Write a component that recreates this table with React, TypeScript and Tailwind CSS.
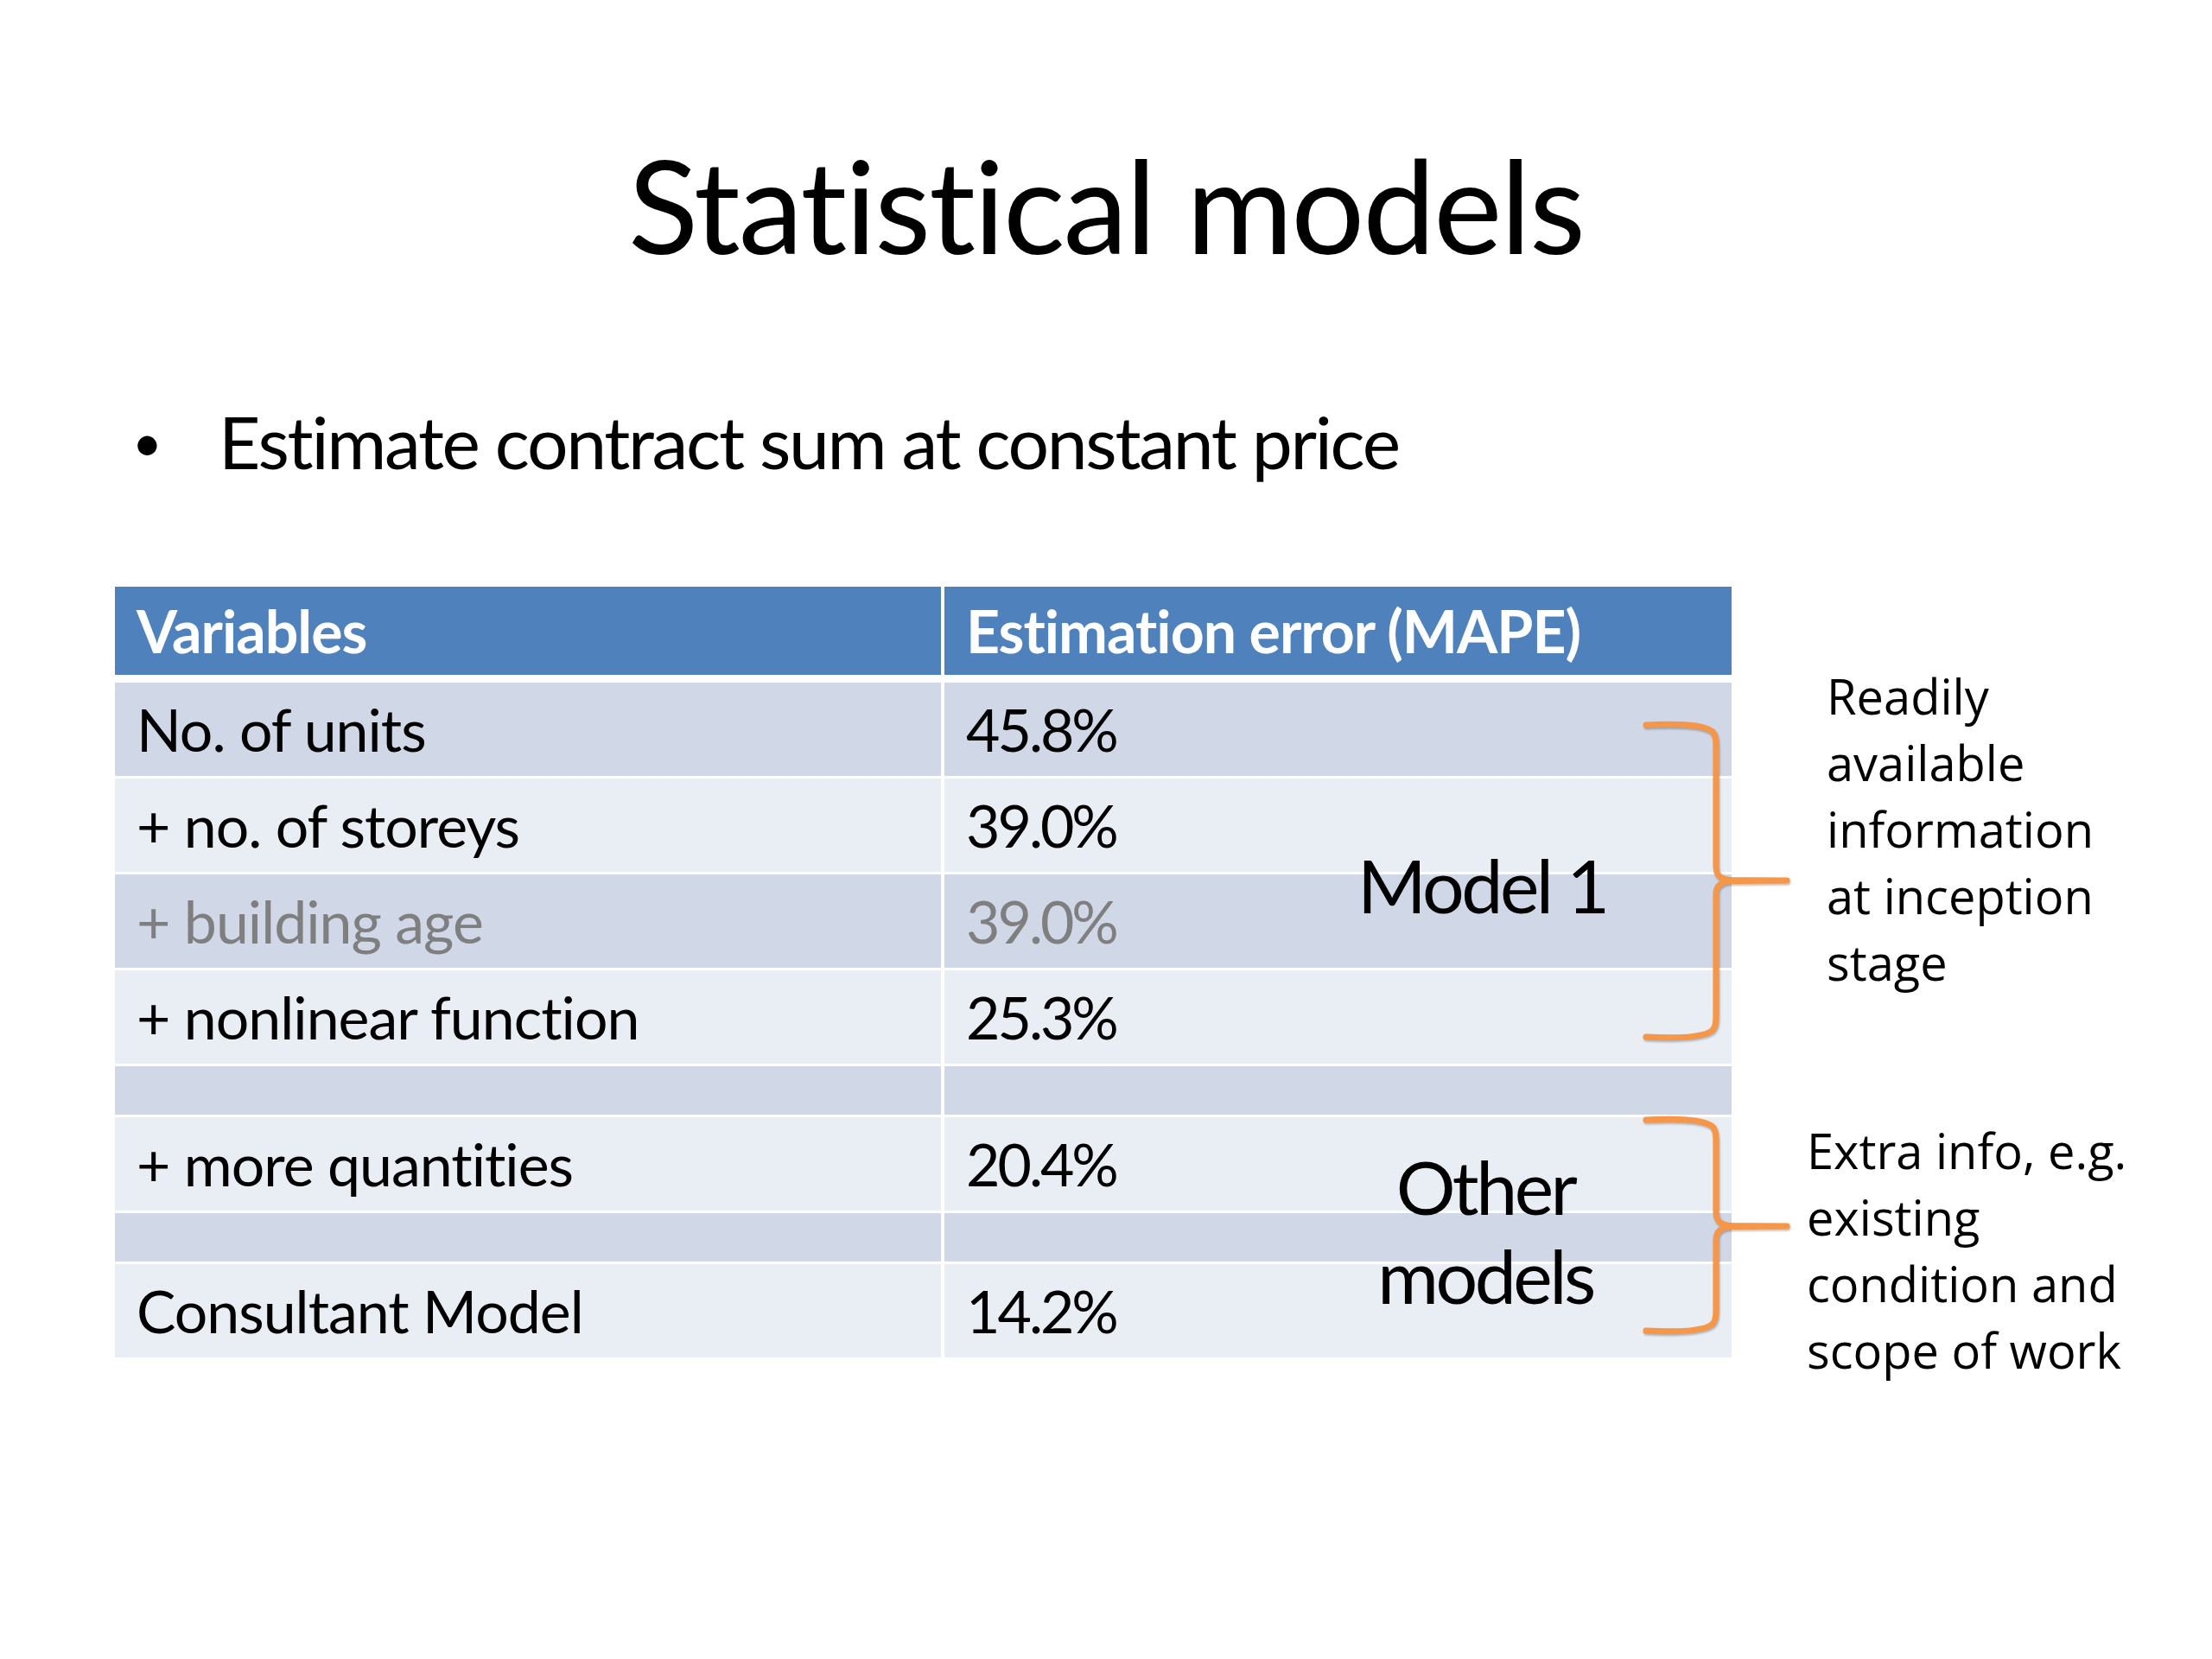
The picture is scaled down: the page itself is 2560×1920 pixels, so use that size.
import React from "react";

const rows = [
  { v: "No. of units", e: "45.8%", band: "dark" },
  { v: "+ no. of storeys", e: "39.0%", band: "light" },
  { v: "+ building age", e: "39.0%", band: "dark", muted: true },
  { v: "+ nonlinear function", e: "25.3%", band: "light" },
  { v: "", e: "", band: "dark", spacer: true },
  { v: "+ more quantities", e: "20.4%", band: "light" },
  { v: "", e: "", band: "dark", spacer: true },
  { v: "Consultant Model", e: "14.2%", band: "light" },
];

// curly brace, tips on the left, beak pointing right
function bracePath(h: number, m: number) {
  return [
    `M0,2 C38,0 66,2 76,9 C81,13 81,20 81,30`,
    `L81,${m - 16} C81,${m - 6} 86,${m - 1} 100,${m - 0.5} L163,${m}`,
    `M163,${m} L100,${m + 0.5} C86,${m + 1} 81,${m + 6} 81,${m + 16}`,
    `L81,${h - 30} C81,${h - 20} 81,${h - 13} 76,${h - 9} C66,${h - 2} 38,${h} 0,${h - 2}`,
  ].join(" ");
}

function Brace({ h, m, className }: { h: number; m: number; className: string }) {
  return (
    <svg
      className={`absolute overflow-visible drop-shadow-[1px_2px_1px_rgba(0,0,0,0.25)] ${className}`}
      width={170}
      height={h}
      viewBox={`0 0 170 ${h}`}
    >
      <path d={bracePath(h, m)} fill="none" stroke="#F79646" strokeWidth={7} strokeLinecap="round" />
    </svg>
  );
}

export default function App() {
  return (
    <div className="w-[2560px] h-[1920px] bg-white text-black flex flex-col font-['Lato','Liberation_Sans',sans-serif] [font-variant-ligatures:none]">
      {/* Title */}
      <h1 className="pt-[161px] text-center text-[150px] leading-[150px] font-normal tracking-[-2px]">
        Statistical models
      </h1>

      {/* Bullet */}
      <div className="mt-[158px] flex items-center pl-[153px] text-[84px] leading-[84px]">
        <span className="w-[100px] text-[60px]">•</span>
        <span className="tracking-[-2.3px]">Estimate contract sum at constant price</span>
      </div>

      {/* Table + notes */}
      <div className="mt-[126px] flex pl-[133px]">
        <div className="relative w-[1871px]">
          <div className="flex h-[102px] bg-[#4F81BD] text-white font-bold text-[68px] tracking-[-1px]">
            <div className="flex w-[956px] items-center pl-[25px]">Variables</div>
            <div className="w-[4px] bg-white" />
            <div className="flex flex-1 items-center pl-[25px]">Estimation error (MAPE)</div>
          </div>
          <div className="h-[9px]" />
          <div className="flex flex-col gap-[3px] text-[68px]">
            {rows.map((r, i) => (
              <div
                key={i}
                className={`flex ${r.spacer ? "h-[56px]" : "h-[108px]"} ${
                  r.band === "dark" ? "bg-[#D0D8E8]" : "bg-[#E9EDF4]"
                } ${r.muted ? "text-[#7F7F7F]" : "text-black"}`}
              >
                <div className="flex w-[956px] items-center pl-[25px] tracking-[-1px]">{r.v}</div>
                <div className="w-[4px] bg-white" />
                <div className="flex flex-1 items-center pl-[25px] tracking-[-3px]">{r.e}</div>
              </div>
            ))}
          </div>

          {/* overlay labels */}
          <div className="absolute left-[1438px] top-[302px] text-[86px] leading-[86px] tracking-[-3.5px]">
            Model 1
          </div>
          <div className="absolute left-[1386px] top-[642px] w-[400px] text-center text-[86px] leading-[103px] tracking-[-3.5px]">
            Other
            <br />
            models
          </div>

          <Brace h={365} m={182} className="left-[1772px] top-[158px]" />
          <Brace h={248} m={125} className="left-[1772px] top-[615px]" />
        </div>

        {/* notes */}
        <div className="flex flex-col font-['Open_Sans','Noto_Sans',sans-serif] text-[56px] leading-[77px]">
          <div className="ml-[110px] mt-[88px]">
            Readily
            <br />
            available
            <br />
            information
            <br />
            at inception
            <br />
            stage
          </div>
          <div className="ml-[87px] mt-[141px] whitespace-nowrap">
            Extra info, e.g.
            <br />
            existing
            <br />
            condition and
            <br />
            scope of work
          </div>
        </div>
      </div>
    </div>
  );
}
